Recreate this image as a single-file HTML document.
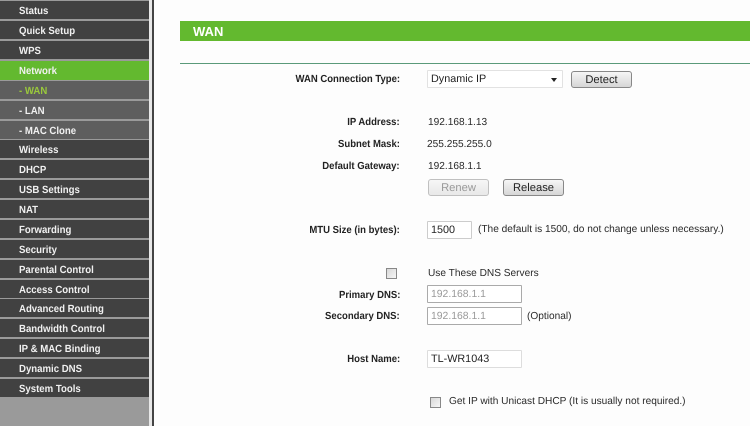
<!DOCTYPE html>
<html><head><meta charset="utf-8"><style>
html,body{margin:0;padding:0;width:750px;height:426px;overflow:hidden;background:#fdfdfd;font-family:"Liberation Sans",sans-serif;text-rendering:geometricPrecision;}
#root{position:relative;width:750px;height:426px;overflow:hidden;filter:blur(0.25px);}
.a{position:absolute;white-space:nowrap;}
#side{position:absolute;left:0;top:0;width:149px;height:426px;background:#9a9a9a;}
.m{position:absolute;left:0;width:149px;height:18px;background:#414141;color:#f0f0f0;font-weight:bold;font-size:10.4px;line-height:21px;padding-left:19px;box-sizing:border-box;}
.m span{display:inline-block;transform:scaleX(.925);transform-origin:left center;white-space:nowrap;}
.s{background:#5e5e5e;}
.l{font-weight:bold;font-size:10.3px;color:#222;text-align:right;right:350px;line-height:14px;transform:scaleX(.925);transform-origin:right center;}
.t{font-size:10.15px;color:#2a2a2a;line-height:14px;}
.b{position:absolute;box-sizing:border-box;border:1px solid #888;border-radius:3px;background:linear-gradient(#f6f6f6,#d6d6d6);font-size:11.2px;text-align:center;color:#222;height:17px;line-height:17px;}
.i{position:absolute;box-sizing:border-box;border:1px solid #aaa;border-radius:1px;left:427px;width:95px;height:18px;background:#fff;font-size:10.8px;line-height:17px;padding-left:3px;color:#222;}
.c{position:absolute;box-sizing:border-box;width:11px;height:11px;border:1px solid #888;background:linear-gradient(135deg,#d8d8d8,#f6f6f6);}
</style></head><body><div id="root">
<div id="side">
<div class="m" style="top:1px"><span>Status</span></div>
<div class="m" style="top:21px"><span>Quick Setup</span></div>
<div class="m" style="top:41px"><span>WPS</span></div>
<div class="m" style="top:61px;background:#63b92f;height:19px"><span>Network</span></div>
<div class="m s" style="top:81px;color:#9ac93c"><span>- WAN</span></div>
<div class="m s" style="top:101px"><span>- LAN</span></div>
<div class="m s" style="top:121px"><span>- MAC Clone</span></div>
<div class="m" style="top:140px"><span>Wireless</span></div>
<div class="m" style="top:160px"><span>DHCP</span></div>
<div class="m" style="top:180px"><span>USB Settings</span></div>
<div class="m" style="top:200px"><span>NAT</span></div>
<div class="m" style="top:220px"><span>Forwarding</span></div>
<div class="m" style="top:240px"><span>Security</span></div>
<div class="m" style="top:260px"><span>Parental Control</span></div>
<div class="m" style="top:280px"><span>Access Control</span></div>
<div class="m" style="top:299px"><span>Advanced Routing</span></div>
<div class="m" style="top:319px"><span>Bandwidth Control</span></div>
<div class="m" style="top:339px"><span>IP &amp; MAC Binding</span></div>
<div class="m" style="top:359px"><span>Dynamic DNS</span></div>
<div class="m" style="top:379px"><span>System Tools</span></div>
</div>
<div class="a" style="left:149px;top:0;width:3px;height:426px;background:#e8e8e8"></div>
<div class="a" style="left:152px;top:0;width:2px;height:426px;background:#444"></div>

<div class="a" style="left:180px;top:21px;width:570px;height:20px;background:#63b92f;color:#fff;font-weight:bold;font-size:13px;line-height:21px;padding-left:13px;box-sizing:border-box">WAN</div>
<div class="a" style="left:180px;top:63px;width:570px;height:1px;background:#5a9a7a"></div>

<div class="a l" style="top:73px">WAN Connection Type:</div>
<div class="i" style="top:70px;width:136px;border-color:#e2e2e2;">Dynamic IP</div>
<div class="a" style="left:551px;top:78px;width:0;height:0;border-left:3.5px solid transparent;border-right:3.5px solid transparent;border-top:4px solid #222"></div>
<div class="b" style="left:571px;top:71px;width:61px;">Detect</div>

<div class="a l" style="top:116px">IP Address:</div>
<div class="a t" style="left:428px;top:116px">192.168.1.13</div>
<div class="a l" style="top:138px">Subnet Mask:</div>
<div class="a t" style="left:427px;top:138px">255.255.255.0</div>
<div class="a l" style="top:160px">Default Gateway:</div>
<div class="a t" style="left:428px;top:160px">192.168.1.1</div>
<div class="b" style="left:428px;top:179px;width:61px;border-color:#c0c0c0;color:#999;background:linear-gradient(#f6f6f6,#e8e8e8);line-height:16px">Renew</div>
<div class="b" style="left:503px;top:179px;width:61px;line-height:16px">Release</div>

<div class="a l" style="top:224px">MTU Size (in bytes):</div>
<div class="i" style="top:221px;width:45px;border-color:#ccc">1500</div>
<div class="a t" style="left:478px;top:223px">(The default is 1500, do not change unless necessary.)</div>

<div class="c" style="left:386px;top:268px"></div>
<div class="a t" style="left:428px;top:267px">Use These DNS Servers</div>
<div class="a l" style="top:289px">Primary DNS:</div>
<div class="i" style="top:285px;color:#999;font-size:10.4px">192.168.1.1</div>
<div class="a l" style="top:310px">Secondary DNS:</div>
<div class="i" style="top:307px;color:#999;font-size:10.4px">192.168.1.1</div>
<div class="a t" style="left:527px;top:310px">(Optional)</div>
<div class="a l" style="top:353px">Host Name:</div>
<div class="i" style="top:350px;border-color:#ddd">TL-WR1043</div>
<div class="c" style="left:430px;top:397px"></div>
<div class="a t" style="left:449px;top:395px">Get IP with Unicast DHCP (It is usually not required.)</div>
</div></body></html>
